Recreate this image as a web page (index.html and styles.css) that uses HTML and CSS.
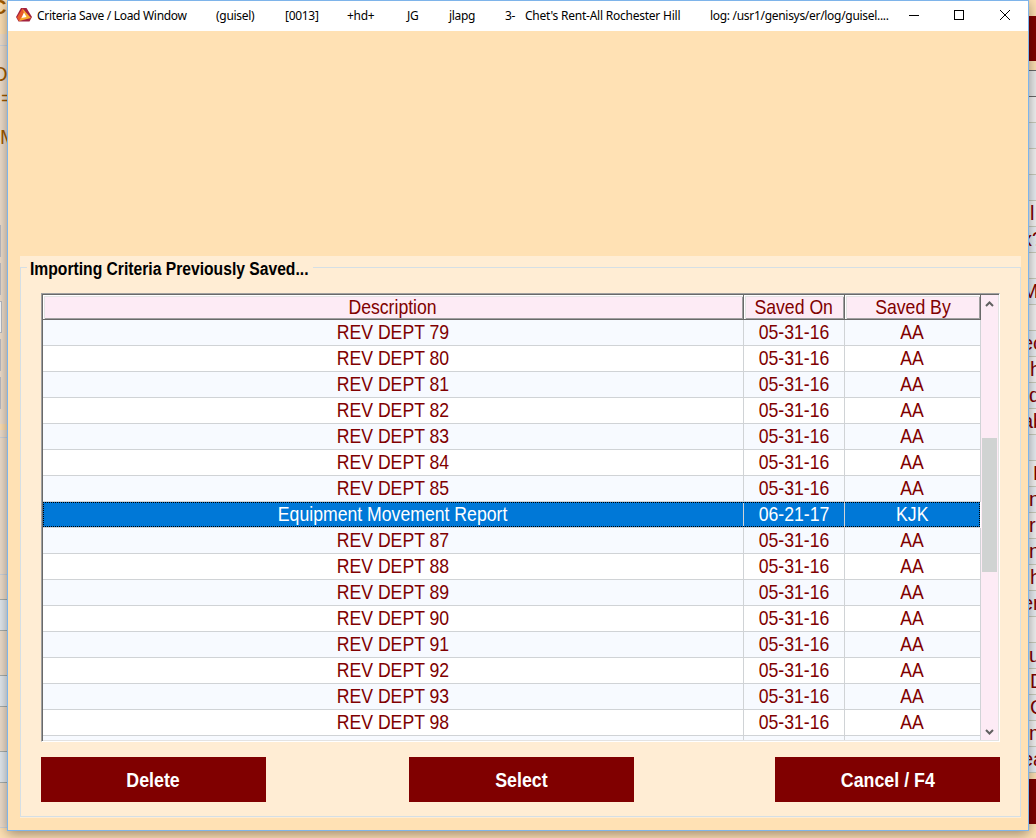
FILE: index.html
```
<!DOCTYPE html>
<html lang="en">
<head>
  <meta charset="UTF-8" />
  <title>Criteria Save / Load Window</title>
  <link rel="stylesheet" href="styles.css">
</head>
<body>

<div class="desktop">
  <!-- edges of the window behind -->
  <div class="behind-left">
    <div class="bl-top">C</div>
    <div class="bl-gap"></div>
    <div class="bl-text">O</div>
    <div class="bl-text eq">=</div>
    <div class="bl-text em">M</div>
    <div class="bl-fields">
      <i></i><i></i><i class="on"></i><i></i><i></i>
    </div>
    <div class="bl-tab"></div>
    <div class="bl-lines"></div>
    <div class="bl-cells"><b></b><b></b><b></b></div>
    <div class="bl-end"></div>
  </div>
  <div class="behind-right">
    <div class="br-top"></div>
    <div class="br-btn"></div>
    <div class="br-gap"></div>
    <div class="br-head"></div>
    <div class="br-row"></div>
    <div class="br-row"></div>
    <div class="br-row"></div>
    <div class="br-row"></div>
    <div class="br-row in">l</div>
    <div class="br-row cut">x?</div>
    <div class="br-row"></div>
    <div class="br-row cut">MT</div>
    <div class="br-row"></div>
    <div class="br-row cut">ec</div>
    <div class="br-row in">h</div>
    <div class="br-row">d</div>
    <div class="br-row cut">ab</div>
    <div class="br-row"></div>
    <div class="br-row far">F</div>
    <div class="br-row">n</div>
    <div class="br-row">rg</div>
    <div class="br-row">n</div>
    <div class="br-row in">h</div>
    <div class="br-row cut">er</div>
    <div class="br-row"></div>
    <div class="br-row">u</div>
    <div class="br-row in">D</div>
    <div class="br-row in">C</div>
    <div class="br-row">m</div>
    <div class="br-row cut">ea</div>
    <div class="br-foot"></div>
    <div class="br-btn"></div>
  </div>

  <div class="window">
    <div class="titlebar">
      <svg class="logo" width="16" height="16" viewBox="0 0 16 16">
        <path d="M5 1H10.500L16 10L13.500 14.500H2.500L0 10Z" fill="#a3223f"/>
        <path d="M6.500 1.500L15 11L3 14Z" fill="#f9a92b"/>
        <path d="M6.500 1.500L8 6L5 11L3 14L1 10.500Z" fill="#ea5a2c"/>
        <path d="M8 5.500L10.500 10L5.500 11Z" fill="#fff"/>
      </svg>
      <div class="title">
        <span class="t-name">Criteria Save / Load Window</span>
        <span>(guisel)</span>
        <span>[0013]</span>
        <span>+hd+</span>
        <span>JG</span>
        <span>jlapg</span>
        <span>3-</span>
        <span class="t-store">Chet's Rent-All Rochester Hill</span>
        <span class="t-log">log: /usr1/genisys/er/log/guisel....</span>
      </div>
      <svg class="controls" width="102" height="12" viewBox="0 0 102 12" fill="none" stroke="#000" shape-rendering="crispEdges">
        <path d="M0 6.500H10"/>
        <rect x="45.500" y="1.500" width="9" height="9"/>
        <path d="M91 1L101 11M101 1L91 11" shape-rendering="auto"/>
      </svg>
    </div>

    <div class="panel">
      <fieldset class="group">
        <legend><span>Importing Criteria Previously Saved...</span></legend>

        <div class="list">
          <div class="grid">
            <div class="row head"><div><span>Description</span></div><div><span>Saved On</span></div><div><span>Saved By</span></div></div>
            <div class="row"><div><span>REV DEPT 79</span></div><div><span>05-31-16</span></div><div><span>AA</span></div></div>
            <div class="row"><div><span>REV DEPT 80</span></div><div><span>05-31-16</span></div><div><span>AA</span></div></div>
            <div class="row"><div><span>REV DEPT 81</span></div><div><span>05-31-16</span></div><div><span>AA</span></div></div>
            <div class="row"><div><span>REV DEPT 82</span></div><div><span>05-31-16</span></div><div><span>AA</span></div></div>
            <div class="row"><div><span>REV DEPT 83</span></div><div><span>05-31-16</span></div><div><span>AA</span></div></div>
            <div class="row"><div><span>REV DEPT 84</span></div><div><span>05-31-16</span></div><div><span>AA</span></div></div>
            <div class="row"><div><span>REV DEPT 85</span></div><div><span>05-31-16</span></div><div><span>AA</span></div></div>
            <div class="row selected"><div><span>Equipment Movement Report</span></div><div><span>06-21-17</span></div><div><span>KJK</span></div></div>
            <div class="row"><div><span>REV DEPT 87</span></div><div><span>05-31-16</span></div><div><span>AA</span></div></div>
            <div class="row"><div><span>REV DEPT 88</span></div><div><span>05-31-16</span></div><div><span>AA</span></div></div>
            <div class="row"><div><span>REV DEPT 89</span></div><div><span>05-31-16</span></div><div><span>AA</span></div></div>
            <div class="row"><div><span>REV DEPT 90</span></div><div><span>05-31-16</span></div><div><span>AA</span></div></div>
            <div class="row"><div><span>REV DEPT 91</span></div><div><span>05-31-16</span></div><div><span>AA</span></div></div>
            <div class="row"><div><span>REV DEPT 92</span></div><div><span>05-31-16</span></div><div><span>AA</span></div></div>
            <div class="row"><div><span>REV DEPT 93</span></div><div><span>05-31-16</span></div><div><span>AA</span></div></div>
            <div class="row"><div><span>REV DEPT 98</span></div><div><span>05-31-16</span></div><div><span>AA</span></div></div>
            <div class="row last"><div></div><div></div><div></div></div>
          </div>
          <div class="scrollbar">
            <svg width="9" height="6" viewBox="0 0 9 6" fill="none" stroke="#606060" stroke-width="2"><path d="M1 5L4.500 1.500L8 5"/></svg>
            <div class="thumb"></div>
            <svg width="9" height="6" viewBox="0 0 9 6" fill="none" stroke="#606060" stroke-width="2"><path d="M1 1L4.500 4.500L8 1"/></svg>
          </div>
        </div>

        <div class="buttons">
          <button><span>Delete</span></button>
          <button class="mid"><span>Select</span></button>
          <button><span>Cancel / F4</span></button>
        </div>
      </fieldset>
    </div>
  </div>
</div>

</body>
</html>
```
FILE: styles.css
```
* {
  margin: 0;
  padding: 0;
  box-sizing: border-box;
}

body {
  width: 1036px;
  height: 838px;
  overflow: hidden;
  font-family: "Liberation Sans", Arial, sans-serif;
}

.desktop {
  position: relative;
  display: flex;
  justify-content: space-between;
  height: 838px;
  background: #ffe1b4;
}

/* window behind, left edge */
.behind-left {
  width: 7px;
  overflow: hidden;
  background: #f0dfcd;
  color: #a05a00;
  font-size: 20px;
}

.bl-top {
  height: 34px;
  background: #ffe1b4;
  font-weight: bold;
  line-height: 14px;
  text-indent: -8px;
}

.bl-gap {
  height: 29px;
  background: linear-gradient(#cfd4dc, #cfd4dc) 0 11px / 100% 1px no-repeat;
}

.bl-text {
  height: 24px;
  line-height: 22px;
  text-indent: -8px;
}

.bl-text.eq {
  text-indent: 1px;
}

.bl-text.em {
  height: 114px;
  line-height: 52px;
  text-indent: 0;
}

.bl-fields i {
  display: block;
  width: 1px;
  height: 32px;
  margin-bottom: 6px;
  background: #b9bcc4;
}

.bl-fields i.on {
  width: 2px;
  border: 1px solid #b9bcc4;
  border-left: 0;
  background: #fff;
}

.bl-tab {
  height: 22px;
  padding: 9px 0 7px;
  background: #ffe1b4 content-box;
}

.bl-lines {
  height: 162px;
  border-top: 1px solid #cfd4dc;
  background: linear-gradient(#cfd4dc, #cfd4dc) 0 136px / 100% 1px no-repeat;
}

.bl-cells b {
  display: block;
  height: 32px;
  margin-bottom: 44px;
  border: 1px solid #a9b0ae;
  border-width: 1px 0;
  background: #e4eaf0;
}

.bl-end {
  height: 20px;
  border-top: 1px solid #cfd4dc;
  background: #ffe1b4;
}

/* window behind, right edge */
.behind-right {
  width: 7px;
  overflow: hidden;
  color: #800000;
  font-size: 20px;
}

.br-top {
  height: 16px;
}

.br-btn {
  height: 45px;
  background: #800000;
}

.br-gap {
  height: 9px;
}

.br-head {
  height: 27px;
  border: 1px solid #696969;
  border-width: 1px 0;
  background: #ebebeb;
}

.br-row {
  height: 26px;
  border-bottom: 1px solid #c8ccbc;
  background: #e9eef3;
  line-height: 25px;
  white-space: nowrap;
  overflow: hidden;
}

.br-row:nth-child(odd) {
  background: #f3f3f3;
}

.br-row.in {
  text-indent: 1px;
}

.br-row.far {
  text-indent: 4px;
}

.br-row.cut {
  text-indent: -7px;
}

.br-foot {
  height: 6px;
}

/* main window */
.window {
  position: absolute;
  left: 7px;
  top: 0;
  width: 1022px;
  height: 831px;
  border: 1px solid #7eb4ea;
  background: #ffe1b4;
  box-shadow: 0 3px 12px rgba(0, 0, 0, 0.4);
}

.titlebar {
  display: flex;
  align-items: center;
  height: 30px;
  padding: 0 17px 0 8px;
  background: #fff;
}

.logo {
  margin-top: -2px;
}

.title {
  display: grid;
  grid-template-columns: 179px 69px 62px 60px 42px 56px 20px 185px 199px;
  margin-left: 5px;
  font-family: "Noto Sans", "Open Sans", sans-serif;
  font-size: 12px;
  line-height: 28px;
  letter-spacing: -0.3px;
  color: #000;
  white-space: pre;
}

.t-store {
  letter-spacing: -0.23px;
}

.controls {
  margin-top: -2px;
}

.panel {
  margin: 225px 7px 0 12px;
  height: 562px;
  background: #ffedd4;
}

.group {
  height: 561px;
  min-width: 0;
  border: 1px solid #d5dfe5;
}

.group legend {
  width: 286px;
  height: 22px;
  margin-left: 6px;
  padding-left: 3px;
  font-size: 18px;
  font-weight: bold;
  line-height: 26px;
  color: #000;
  white-space: nowrap;
}

.group legend span {
  display: inline-block;
  transform: scaleX(0.87);
  transform-origin: left;
}

.list {
  display: flex;
  width: 959px;
  height: 449px;
  margin: 15px 0 0 20px;
  border-top: 1px solid #a0a0a0;
  border-left: 1px solid #a0a0a0;
  border-right: 1px solid #fff;
  border-bottom: 1px solid #fff;
  box-shadow: inset 1px 1px #696969, inset -1px -1px #e3e3e3;
  padding: 1px;
  background: #fff;
}

.grid {
  width: 938px;
  overflow: hidden;
}

.row {
  display: grid;
  grid-template-columns: 701px 101px 136px;
  height: 26px;
  font-size: 21px;
  line-height: 23px;
  text-align: center;
  color: #800000;
}

.row div {
  border-right: 1px solid #d0d3d6;
  border-bottom: 1px solid #d0d3d6;
}

.row:nth-child(even) div {
  background: #f7faff;
}

.row span {
  display: inline-block;
  transform: scaleX(0.84);
  white-space: nowrap;
}

.row.head {
  height: 25px;
  line-height: 24px;
}

.row.head div {
  border-color: #696969;
  background: #fdebf5;
  box-shadow: inset 1px 1px #fff, inset 2px 2px #e3e3e3, inset -1px -1px #a0a0a0;
}

.row.selected {
  grid-template-columns: 701px 101px 135px;
  width: 937px;
  height: 25px;
  margin-bottom: 1px;
  color: #fff;
  box-shadow: 0 1px #d0d3d6;
  outline: 1px dotted #000;
  outline-offset: -1px;
}

.row.selected div {
  background: #0078d7;
  border-bottom: 0;
}

.row.selected div:last-child {
  border-right: 0;
}

.row.last {
  height: 4px;
}

.row.last div {
  border-bottom: 0;
}

.scrollbar {
  display: flex;
  flex-direction: column;
  align-items: center;
  width: 17px;
  padding: 6px 0 5px;
  background: #fdebf5;
}

.thumb {
  width: 15px;
  height: 134px;
  margin: 131px 0 auto;
  background: #d0d3d2;
}

.buttons {
  display: flex;
  justify-content: space-between;
  width: 959px;
  margin: 15px 0 0 20px;
}

.buttons button {
  width: 225px;
  height: 45px;
  padding-top: 2px;
  border: 0;
  background: #800000;
  color: #fff;
  font-family: "Liberation Sans", Arial, sans-serif;
  font-size: 20px;
  font-weight: bold;
}

.buttons .mid {
  margin-left: 2px;
}

.buttons span {
  display: inline-block;
  transform: scaleX(0.89);
}
```
